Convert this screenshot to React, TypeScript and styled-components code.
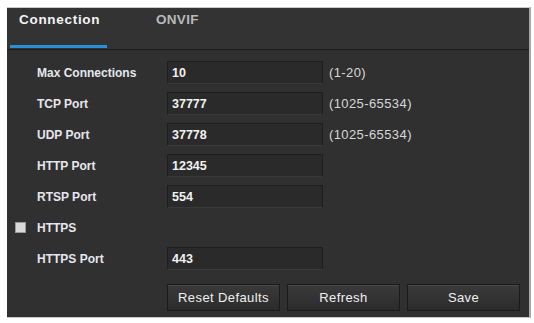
import React from "react";
import styled, { createGlobalStyle } from "styled-components";

const Global = createGlobalStyle`
  html, body { margin: 0; padding: 0; background: #ffffff; }
  body { font-family: "Liberation Sans", Arial, sans-serif; }
`;

const Panel = styled.div`
  margin: 7px 0 0 7px;
  width: 524px;
  height: 311px;
  box-sizing: border-box;
  background: #303030;
  border-top: 1px solid #c8c8c8;
  border-right: 2px solid #a8a8a8;
  border-bottom: 1px solid #c8c8c8;
  display: flex;
  flex-direction: column;
`;

const TabBar = styled.div`
  height: 41px;
  background: #333333;
  border-bottom: 1px solid #1c1c1c;
  display: flex;
  align-items: stretch;
  padding-left: 3px;
`;

const Tab = styled.div<{ $active?: boolean; $w: number; $pad: number }>`
  width: ${(p) => p.$w}px;
  box-sizing: border-box;
  padding-left: ${(p) => p.$pad}px;
  padding-top: 4px;
  font-size: 13.5px;
  font-weight: bold;
  letter-spacing: ${(p) => (p.$active ? "0.7px" : "0.3px")};
  color: ${(p) => (p.$active ? "#f4f4f4" : "#b9b9b9")};
  border-bottom: 3px solid ${(p) => (p.$active ? "#2b8fd8" : "transparent")};
  margin-bottom: 1px;
`;

const Body = styled.div`
  padding-top: 7px;
  display: flex;
  flex-direction: column;
`;

const Row = styled.div`
  height: 31px;
  display: grid;
  grid-template-columns: 30px 130px 156px auto;
  align-items: center;
`;

const Label = styled.div`
  font-size: 12px;
  font-weight: bold;
  color: #e6e6ee;
`;

const Input = styled.div`
  height: 23px;
  box-sizing: border-box;
  background: #2a2a2a;
  border: 1px solid #1e1e1e;
  border-bottom-color: #3a3a3a;
  display: flex;
  align-items: center;
  padding-left: 4px;
  font-size: 12.5px;
  font-weight: bold;
  color: #f2f2f2;
`;

const Hint = styled.div`
  padding-left: 6px;
  font-size: 13px;
  letter-spacing: 0.4px;
  color: #d8d8d8;
`;

const CheckCell = styled.div`
  display: flex;
  justify-content: flex-start;
  padding-left: 8px;
`;

const Check = styled.div`
  width: 11px;
  height: 11px;
  background: #d9d9d9;
  border: 1px solid #9a9a9a;
  box-sizing: border-box;
`;

const Buttons = styled.div`
  margin-top: 10px;
  padding-left: 160px;
  display: flex;
  gap: 7px;
`;

const Button = styled.div`
  width: 113px;
  height: 27px;
  box-sizing: border-box;
  background: linear-gradient(#3a3a3a, #2c2c2c);
  border: 1px solid #1b1b1b;
  box-shadow: inset 0 1px 0 #474747;
  display: flex;
  align-items: center;
  justify-content: center;
  font-size: 13px;
  letter-spacing: 0.4px;
  color: #f0f0f0;
`;

const fields = [
  { label: "Max Connections", value: "10", hint: "(1-20)" },
  { label: "TCP Port", value: "37777", hint: "(1025-65534)" },
  { label: "UDP Port", value: "37778", hint: "(1025-65534)" },
  { label: "HTTP Port", value: "12345" },
  { label: "RTSP Port", value: "554" },
];

export default function App() {
  return (
    <>
      <Global />
      <Panel>
        <TabBar>
          <Tab $active $w={97} $pad={9}>Connection</Tab>
          <Tab $w={120} $pad={49}>ONVIF</Tab>
        </TabBar>
        <Body>
          {fields.map((f) => (
            <Row key={f.label}>
              <span />
              <Label>{f.label}</Label>
              <Input>{f.value}</Input>
              {f.hint ? <Hint>{f.hint}</Hint> : <span />}
            </Row>
          ))}
          <Row>
            <CheckCell>
              <Check />
            </CheckCell>
            <Label>HTTPS</Label>
            <span />
            <span />
          </Row>
          <Row>
            <span />
            <Label>HTTPS Port</Label>
            <Input>443</Input>
            <span />
          </Row>
          <Buttons>
            <Button>Reset Defaults</Button>
            <Button>Refresh</Button>
            <Button>Save</Button>
          </Buttons>
        </Body>
      </Panel>
    </>
  );
}
